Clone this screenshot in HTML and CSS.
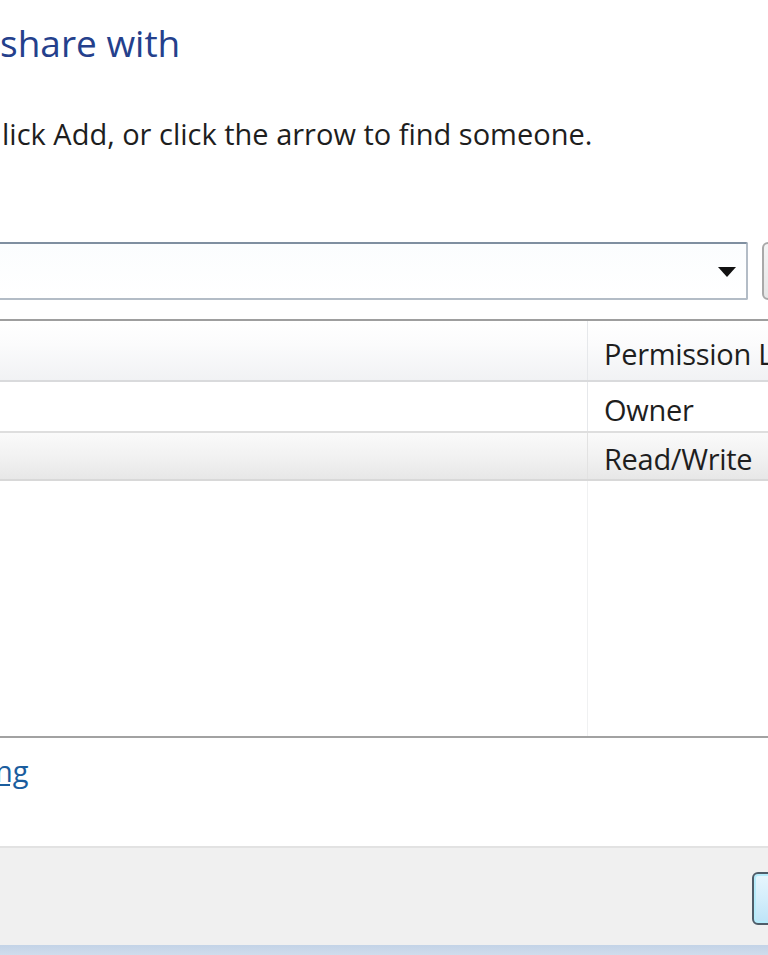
FILE: index.html
```html
<!DOCTYPE html>
<html lang="en">
<head>
<meta charset="utf-8">
<title>File Sharing</title>
<link rel="stylesheet" href="styles.css">
</head>
<body>
<div class="dialog">
  <main class="content">
    <h1 class="title">share with</h1>
    <p class="instr">lick Add, or click the arrow to find someone.</p>
    <div class="addrow">
      <div class="combo"><span class="arrow"></span></div>
      <div class="addbtn"></div>
    </div>
    <div class="list">
      <div class="lrow lhead">
        <div class="cell c1"></div>
        <div class="cell c2">Permission Level</div>
      </div>
      <div class="lrow plain">
        <div class="cell c1"></div>
        <div class="cell c2">Owner</div>
      </div>
      <div class="lrow sel">
        <div class="cell c1"></div>
        <div class="cell c2">Read/Write</div>
      </div>
      <div class="lrow lfill">
        <div class="cell c1"></div>
        <div class="cell c2"></div>
      </div>
    </div>
    <a class="help" href="#">ng</a>
  </main>
  <footer class="foot">
    <div class="okbtn"></div>
  </footer>
  <div class="frame"></div>
</div>
</body>
</html>
```
FILE: styles.css
```css
html, body {
  margin: 0;
  padding: 0;
  background: #ffffff;
}

body {
  width: 768px;
  height: 955px;
  overflow: hidden;
  font-family: "Open Sans", "Noto Sans", "Liberation Sans", sans-serif;
  color: #1e1e1e;
}

.dialog {
  display: flex;
  flex-direction: column;
  height: 955px;
}

.content {
  flex: 1;
  display: flex;
  flex-direction: column;
  padding-top: 21px;
  background: #ffffff;
}

.title {
  margin: 0;
  font-size: 37px;
  line-height: 44px;
  font-weight: 400;
  color: #24408c;
  letter-spacing: 0;
  white-space: nowrap;
}

.instr {
  margin: 52px 0 0 0;
  font-size: 29px;
  line-height: 34px;
  letter-spacing: 0;
  padding-left: 2px;
  white-space: nowrap;
}

.addrow {
  margin-top: 91px;
  display: flex;
  gap: 14px;
  height: 58px;
}

.combo {
  flex: 0 0 750px;
  margin-left: -2px;
  box-sizing: border-box;
  height: 58px;
  border: 2px solid #b3bcc6;
  border-top-color: #7f8fa0;
  border-radius: 2px;
  background: linear-gradient(#fbfdfe, #ffffff);
  display: flex;
  align-items: center;
  justify-content: flex-end;
  padding-right: 10px;
}

.arrow {
  width: 0;
  height: 0;
  border-left: 9px solid transparent;
  border-right: 9px solid transparent;
  border-top: 10px solid #111111;
  margin-top: 2px;
}

.addbtn {
  flex: 0 0 60px;
  box-sizing: border-box;
  height: 58px;
  border: 2px solid #a9a9a9;
  border-radius: 6px;
  background: linear-gradient(#f4f4f4, #e6e6e6);
}

.list {
  margin-top: 19px;
  margin-left: -4px;
  width: 780px;
  border-top: 2px solid #9e9e9e;
  border-bottom: 2px solid #a2a2a2;
  display: flex;
  flex-direction: column;
  height: 419px;
  box-sizing: border-box;
}

.lrow {
  display: grid;
  grid-template-columns: 592px 1fr;
  box-sizing: border-box;
}

.cell {
  display: flex;
  align-items: center;
  font-size: 29px;
  letter-spacing: -0.3px;
  white-space: nowrap;
  overflow: hidden;
}

.c1 {
  border-right: 1px solid #e6e8eb;
}

.c2 {
  padding-left: 16px;
}

.lhead {
  height: 61px;
  background: linear-gradient(#ffffff 0%, #fbfbfc 40%, #f1f2f4 100%);
  border-bottom: 2px solid #d9dadc;
}

.lhead .c2 {
  padding-top: 5px;
}

.plain {
  height: 51px;
  background: #ffffff;
  border-bottom: 2px solid #dedede;
}

.plain .c2 {
  padding-top: 5px;
}

.sel {
  height: 48px;
  background: linear-gradient(#fafafa 0%, #f1f1f1 55%, #e7e7e7 100%);
  border-bottom: 2px solid #d8d8d8;
}

.sel .c2 {
  padding-top: 5px;
}

.sel .c1 {
  border-right-color: #e2e2e2;
}

.lfill {
  flex: 1;
  background: #ffffff;
}

.lfill .c1 {
  border-right-color: #f0f1f2;
}

.help {
  margin-top: 16px;
  font-size: 29px;
  line-height: 34px;
  color: #1a5d9e;
  text-decoration: underline;
  text-underline-offset: 2px;
  text-indent: -5px;
  white-space: nowrap;
  align-self: flex-start;
}

.foot {
  height: 99px;
  box-sizing: border-box;
  border-top: 2px solid #e2e2e2;
  background: #f0f0f0;
  display: flex;
  justify-content: flex-end;
  padding-top: 24px;
  margin-right: -40px;
}

.okbtn {
  width: 56px;
  height: 53px;
  box-sizing: border-box;
  border: 2px solid #4f5d69;
  border-radius: 6px;
  background: linear-gradient(#e8f6fd 0%, #d4eefb 50%, #bde4f7 100%);
  box-shadow: inset 0 0 0 2px #b6ecfb;
}

.frame {
  height: 10px;
  background: linear-gradient(#c3d3e7, #cfdcec);
}
```
